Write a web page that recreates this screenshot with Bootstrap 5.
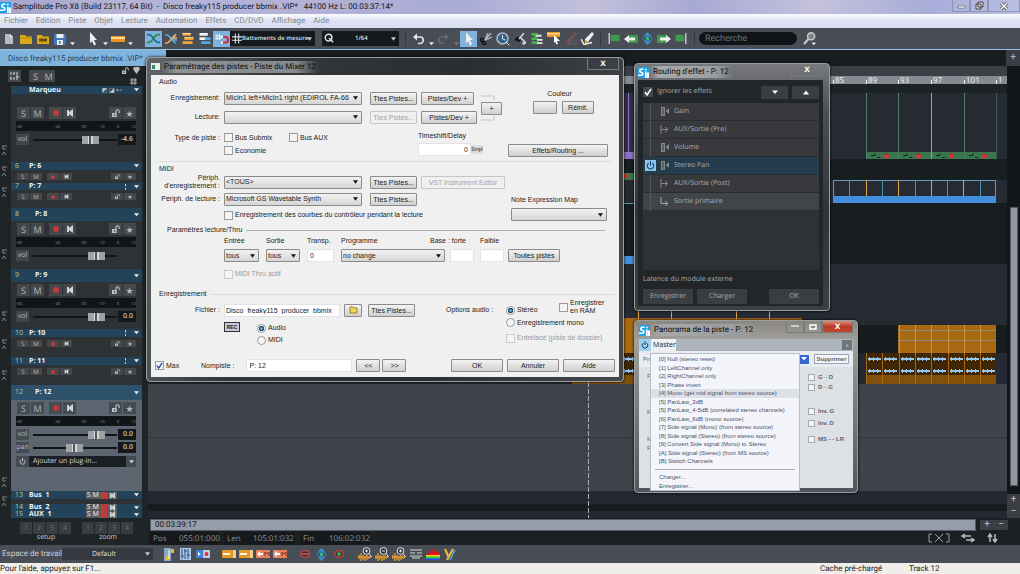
<!DOCTYPE html>
<html lang="fr">
<head>
<meta charset="utf-8">
<meta name="viewport" content="width=device-width, initial-scale=1">
<title>Samplitude Pro X8</title>
<link href="https://cdn.jsdelivr.net/npm/bootstrap@5.3.0/dist/css/bootstrap.min.css" rel="stylesheet">
<style>
:root{--ui:Roboto,"Noto Sans",sans-serif;--ui2:"Open Sans","Noto Sans",sans-serif;--dlg:"Liberation Sans",Arial,sans-serif;--track:#23435a}
body{font:8px/12px var(--ui);background:#1c2023;color:#c8cccf;overflow:hidden;text-rendering:geometricPrecision}
button,input,select{font:inherit;color:inherit;border-radius:0;margin:0;padding:0;text-rendering:inherit}
button{border:0;background:none;line-height:1}
svg{display:block;flex:none}
.minw0{min-width:0;min-height:0}
/* application frame */
.titlebar{height:14px;color:#15151c;background:linear-gradient(90deg,#a6a4cc 0,#b4b3d6 12%,#b3b1d6 30%,#a9abd6 45%,#c3c0dc 58%,#a7a8d4 68%,#c4c1dd 80%,#a7add8 91%,#b9bfe2)}
.winbtns button{width:18px;height:12px;border:1px solid #8f93b8;border-top:0;border-radius:0;display:grid;place-items:center}
.menubar{height:14px;background:linear-gradient(#fbfcff,#dfe4f3 45%,#d8def0)}
.menubar a{color:#85888f;text-decoration:none}
.toolbar{height:22px;background:#494e56;border-bottom:1px solid #8fc1e6}
.tb{width:17px;height:16px;display:grid;place-items:center;flex:none}
.tb.on{background:#7fb2dc}
.tc{width:8px;height:14px;display:grid;place-items:end center;flex:none}
.tsep{width:1px;height:14px;background:#34383e;flex:none}
select{appearance:none;background-repeat:no-repeat;background-position:right 3px center;background-size:5px 4px}
.dk{background-color:#15181c;border:0;color:#dfe2e4;height:15px;background-image:url("data:image/svg+xml,%3Csvg xmlns='http://www.w3.org/2000/svg' viewBox='0 0 6 4'%3E%3Cpath d='M0 0h6L3 4z' fill='%23c8ccd0'/%3E%3C/svg%3E")}
.gridsel{width:85px;font:600 6px/15px var(--ui2);padding-left:12px}
.qsel{width:77px;margin-left:7px;font:600 6px/15px var(--ui2);padding-left:33px}
.glyph{width:0;position:relative}
.glyph svg{position:absolute;left:2px;top:-6px}
.search{width:98px;height:13px;border:0;border-radius:7px;background:#101317;padding-left:6px;font-size:9px}
.search::placeholder{color:#70757b;opacity:1}
.tabstrip{height:16px;background:#1a1d20}
.doctab{width:166px;background:#80b3de;color:#26435e;padding-left:8px;line-height:17px}
.plus{background:#3b3f44;color:#c2c6ca;width:14px;font-size:10px}
/* track list */
.tracks{width:148px;background:#1f2427;flex:none;font-family:var(--ui2)}
.trk{margin-left:11px;margin-right:6px;background:#2e3235;overflow:hidden}
.trk.sel{background:#5c6570}
.th{background:var(--track);color:#eef3f6;font-weight:700;font-size:7px;line-height:1;padding:0 3px 0 4px}
.th i{font-style:normal;font-weight:400;color:#b7c98f;width:14px;display:inline-block}
.th.tall i{width:20px}
.sel .th{background:#2f526c}
.cb{background:#44484b;color:#b4b8bb;display:grid;place-items:center;width:13px;height:12px;font-size:9px}
.small-b .cb{width:12px;height:7px;font-size:6px}
.meter{height:10px;margin:0 6px 0 5px;background:#121518;color:#8d9296;font-size:4px;line-height:6px;padding-top:4px}
.vlab{background:#42464a;color:#b9bdc0;width:13px;line-height:11px;font-size:7px;text-align:center}
.sel .cb,.sel .vlab{background:#454b53}
.fader{width:84px;height:8px;background:linear-gradient(#111416,#111416) 0 3px/100% 2px no-repeat}
.fader b{display:block;height:8px;width:17px;background:linear-gradient(90deg,#9fa4a9 0 6px,#d9dcdf 6px 7px,#555 7px 9px,#d2d6d9 9px 11px,#9ba0a5 11px)}
.num{background:#15181b;color:#c4c8cb;width:18px;font-size:7px;line-height:11px;text-align:right;padding-right:3px;font-weight:600}
.setb button{width:12px;height:12px;background:#3a3d40;color:#6c7073;margin-right:1px}
.edge{width:11px;left:0;top:0;bottom:0;position:absolute}
/* bottom */
.tscroll{height:12px;background:#969daa;border:1px solid #565c66;color:#111;line-height:10px}
.posbox{background:#16191c;color:#8e9397;line-height:13px;padding:0 3px;white-space:pre}
.posbox span{display:inline-block;width:26px}
.wsbar{height:18px;background:#494e56}
.statusbar{height:11px;background:#f0eeeb;color:#222;line-height:11px}
/* floating windows */
.win{position:absolute;border-radius:4px;border:1px solid #9a9da0;box-shadow:0 0 3px #000;z-index:2}
.win>header{font-size:8px;color:#0c0c0c}
.w1{left:146px;top:57px;width:478px;background:linear-gradient(100deg,#60666a,#33363a 25%,#2a2d31 60%,#44484c);padding:0 4px 4px}
.w1>header{height:17px}
.w1 header .halo{background:linear-gradient(90deg,#8b8f9200,#8e9295 10%,#85898c 85%,#85898c00)}
.w2{left:634px;top:63px;width:196px;background:linear-gradient(#77797c,#4b4e52 20%,#303438 60%,#3c3f43);padding:0 6px 4px 3px}
.w2>header{height:16px}
.w3{left:634px;top:320px;width:224px;background:linear-gradient(#8a8680,#a3a19e 12%,#85888c 35%,#50565c);padding:0 4px 4px}
.w3>header{height:18px}
.halo2{background:linear-gradient(90deg,#a6a8aa00,#a6a8aa 12%,#9b9d9f 80%,#9b9d9f00)}
.xb{width:32px;height:12px;border:1px solid #777b7f;border-top:0;color:#fff;font:700 10px/9px var(--dlg)}
.dlg{background:#f0f0f0;color:#1b1b1b;font:7px/10px var(--dlg);padding:2px 4px 0 4px;text-rendering:auto}
.r{display:flex;align-items:center}
.lab{width:65px;text-align:right;flex:none;margin-right:4px}
.dlg select,.dlg .btnw{height:13px;border:1px solid #8b8b8b;border-radius:1px;background-color:#e6e6e6;color:#1b1b1b}
.dlg select{padding:0 12px 0 1px;background-image:url("data:image/svg+xml,%3Csvg xmlns='http://www.w3.org/2000/svg' viewBox='0 0 6 4'%3E%3Cpath d='M0 0h6L3 4z' fill='%23111'/%3E%3C/svg%3E"),linear-gradient(#f2f2f2,#d6d6d6);background-size:5px 4px,100% 100%;background-position:right 3px center,0 0}
.dlg .btnw{background-image:linear-gradient(#f3f3f3,#ddd 60%,#d0d0d0);text-align:center;white-space:nowrap}
.dlg .btnw:disabled{background:#f0f0f0;border-color:#c6c6c6;color:#a3a3a3}
.dlg input[type=text]{height:13px;border:1px solid #e3e3e3;background:#fff;padding:0 2px}
.thru label>*{margin-top:3px}
.tick{appearance:none;width:9px;height:9px;border:1px solid #9a9a9a;background:#f4f4f4;flex:none;margin-right:2px}
.tick:checked{background:#f4f8ff url("data:image/svg+xml,%3Csvg xmlns='http://www.w3.org/2000/svg' viewBox='0 0 8 8'%3E%3Cpath d='M1 4l2 3 4-6' fill='none' stroke='%23203a98' stroke-width='1.4'/%3E%3C/svg%3E")}
.tick[type=radio]{border-radius:50%}
.tick[type=radio]:checked{background:radial-gradient(#6fd0f5 0,#173a63 48%,#f4f4f4 60%)}
.tick:disabled{border-color:#ccc}
.route .tick{width:10px;height:10px;margin-right:4px;border-color:#43474b}
.route .tick:checked{background:#43474b url("data:image/svg+xml,%3Csvg xmlns='http://www.w3.org/2000/svg' viewBox='0 0 8 8'%3E%3Cpath d='M1 4l2 3 4-6' fill='none' stroke='%23fff' stroke-width='1.500'/%3E%3C/svg%3E")}
.line{height:1px;background:#dcdcdc;flex:1}
.route{background:#222629;color:#a9adb0;font:7px/12px var(--ui2);padding:5px 4px 2px 5px}
.route button{background:#3a3e42}
.route .arrow{width:27px;height:13px;color:#fff;display:grid;place-items:center}
.rlist{background:#2f3235;height:167px;margin-top:4px}
.rlist li{height:18px;border-bottom:1px solid #2a2d30;background:#37393d}
.rlist li:last-child{background:#414548}
.rlist li.act{background:#243c4c}
.rlist li .spine{width:8px;height:18px;border-right:1px solid #54585c;margin-right:9px}
.rlist li .pw{background:#8cc4ee;color:#1c4666;padding:1px;margin:0 4px 0 2px}
.foot button{width:50px;height:15px}
.pan{background:#dde1e6;color:#5d636d;font:6px/9px var(--dlg);height:149px;text-rendering:auto}
.pan .menu{position:absolute;left:11px;top:14px;width:150px;background:#f4f5fa;color:#4a5068;border:1px solid #b9bdc9;padding-top:1px}
.pan .menu button{display:block;width:100%;text-align:left;padding-left:8px;height:9px;line-height:9px;white-space:nowrap}
.pan .menu button:nth-child(even){height:8px;line-height:8px}
.pan .menu .hov{background:#dde0e7}
.pan .tick{width:7px;height:7px;margin-right:3px;border-color:#a6acb5}
.ptab{width:37px;height:12px;background:#eef0f2;color:#222;font:7px/12px var(--ui2)}
</style>
</head>
<body class="d-flex flex-column vh-100">

<svg width="0" height="0" class="position-absolute" aria-hidden="true">
<defs>
<symbol id="logo" viewBox="0 0 12 12"><path fill="#1fa2ea" d="M0 0h12v12H0z"/><path d="M6 2.500H3.300C1.500 3 1.500 5.500 3.500 5.700 6 6 6 9 3.500 9H0M8.500 5v7M8.500 2v1.500" fill="none" stroke="#fff" stroke-width="1.800"/><path d="M9.500 6H12v6H9.500z" fill="#fff"/></symbol>
<symbol id="file" viewBox="0 0 12 12"><path d="M2 1h5l3 3v7H2z" fill="#b9bcbf"/><path d="M7 1v3h3z" fill="#e8eaeb"/></symbol>
<symbol id="fold" viewBox="0 0 12 12"><path d="M0 2h5l1 1.500h6V11H0z" fill="#d9a91b"/><path d="M0 5h12" stroke="#a37905" stroke-width=".6"/></symbol>
<symbol id="fold2" viewBox="0 0 12 12"><path d="M0 2h5l1 1.500h6V11H0z" fill="#d9a91b"/><path d="M2 7h8M3 5.500v3M5 4.800v4.500M7 5.500v3M9 5v4" stroke="#3c3108"/></symbol>
<symbol id="save" viewBox="0 0 12 12"><path d="M0 1h11l1 1v10H0z" fill="#3f78b4"/><path d="M2.500 1h7v4h-7zM3 7h6v5H3z" fill="#e8edf2"/><path d="M5 8h1.500v3H5z" fill="#3f78b4"/></symbol>
<symbol id="car" viewBox="0 0 6 4"><path d="M0 0h6L3 3.500z" fill="currentColor"/></symbol>
<symbol id="cur" viewBox="0 0 12 14"><path d="M3 0l7 8H7l2 4.500-2 1L5 9l-2 2.500z" fill="#eceef0"/></symbol>
<symbol id="obj" viewBox="0 0 14 6"><path d="M0 0h14v6H0z" fill="#e9951f"/><path d="M0 1h14v2H0z" fill="#ffd894"/></symbol>
<symbol id="xf" viewBox="0 0 12 10"><path d="M0 1.500h2c3 0 5 7 8 7h2" fill="none" stroke="#176a9d" stroke-width="1.600"/><path d="M0 8.500h2c3 0 5-7 8-7h2" fill="none" stroke="#2c8a45" stroke-width="1.600"/></symbol>
<symbol id="xf2" viewBox="0 0 12 12"><path d="M0 2h2c3 0 4 6 9 8M7 5l4-4M8 7h4" fill="none" stroke="#5ea9e0" stroke-width="1.600"/><path d="M0 10h2c3 0 4-6 9-8M8 5h4" fill="none" stroke="#eab168" stroke-width="1.600"/></symbol>
<symbol id="st1" viewBox="0 0 12 12"><path d="M0 0h9v3H0zM2 4.500h10v3H2zM0 9h11v3H0z" fill="#f0a73a"/><path d="M0 0h9v1H0zM2 4.500h10v1H2z" fill="#ffe0a6"/></symbol>
<symbol id="st2" viewBox="0 0 12 12"><path d="M0 0h9v3H0zM0 4.500h7v3H0z" fill="#f0f3f5"/><path d="M6 4.500h6v3H6zM2 9h10v3H2z" fill="#5aa7dd"/></symbol>
<symbol id="snap" viewBox="0 0 14 12"><path d="M2 1v6M4.500 1v6M0 3h6.500M0 5.500h6.500" stroke="#eef3f7"/><path d="M7 4h3.500a2.500 2.500 0 0 1 0 5.500H7" fill="none" stroke="#cf2b38" stroke-width="2"/><path d="M6 3h2v2H6zM6 8.500h2v2H6z" fill="#fff"/></symbol>
<symbol id="hash" viewBox="0 0 12 12"><path d="M4 0v12M8 0v12M0 4h12M0 8h12" stroke="#dfe2e4" stroke-width="1.300"/></symbol>
<symbol id="quant" viewBox="0 0 12 12"><circle cx="5.500" cy="5.500" r="4" fill="none" stroke="#dfe2e4" stroke-width="1.800"/><path d="M6 6l5 5" stroke="#dfe2e4" stroke-width="1.800"/></symbol>
<symbol id="undo" viewBox="0 0 12 12"><path d="M2 4h5a3.200 3.200 0 0 1 0 6.500H5" fill="none" stroke="currentColor" stroke-width="1.600"/><path d="M0 4l4-3.500V7.500z" fill="currentColor"/></symbol>
<symbol id="scis" viewBox="0 0 12 12"><path d="M11 0L4.500 7.500M12 4L5 7M8 0L5 7" stroke="#b8bbbe" stroke-width="1.300"/><circle cx="2" cy="7" r="1.600" fill="none" stroke="#111" stroke-width="1.400"/><circle cx="4" cy="10" r="1.600" fill="none" stroke="#111" stroke-width="1.400"/></symbol>
<symbol id="ring" viewBox="0 0 14 14"><circle cx="6.500" cy="6.500" r="5.500" fill="#2f628a" stroke="#b1b9bf" stroke-width="1.500"/><path d="M6.500 3v4l3 1M10 10l3.500 3.500" stroke="#dfe3e6" fill="none"/></symbol>
<symbol id="scis2" viewBox="0 0 12 12"><path d="M1 6l5 2M3 4l3 4" stroke="#111" stroke-width="2"/><path d="M6 4l6 6H9l1 2M10 0L5 6" fill="none" stroke="#d6d8da" stroke-width="1.500"/></symbol>
<symbol id="grn" viewBox="0 0 12 12"><path d="M0 0h7v3H0zM0 4.500h7v3H0zM0 9h7v3H0z" fill="#43b34b"/><path d="M7 2h4v2H4V3zM6 6.500h6v2H6zM6 10h6v2H6z" fill="#e3e6e4"/></symbol>
<symbol id="objc" viewBox="0 0 14 13"><path d="M0 0h13v5H0z" fill="#ef9a27"/><path d="M0 1h13v1.500H0z" fill="#ffd187"/><path d="M7 3l6 6h-3l1 3-1.500.5L8 9.500 7 11z" fill="#fff"/></symbol>
<symbol id="pen" viewBox="0 0 14 13"><path d="M3 9L11 0l2 2-8 9-3 1z" fill="currentColor"/><path d="M2 12h11M6 9v3M9 7v5M12 8v4" fill="none" stroke="#5f5a5c"/></symbol>
<symbol id="penw" viewBox="0 0 14 13"><path d="M4 7L11 0l2 2-6 8-3 1z" fill="#eceef0"/><path d="M4 9l2 1" stroke="#e7a52b" stroke-width="2"/><path d="M0 7l3 5.500 8-2" fill="none" stroke="#eceef0" stroke-width="1.500"/></symbol>
<symbol id="gs" viewBox="0 0 12 12"><path d="M0 0h1.500v12H0z" fill="#ccd0d2"/><path d="M2.500 2H12v7H2.500z" fill="#3f9948"/></symbol>
<symbol id="ga" viewBox="0 0 14 10"><path d="M4 1h10v8H4z" fill="#3f9948"/><path d="M0 5L5 1v2.500h6v3H5V9z" fill="#eef1f0"/></symbol>
<symbol id="eye" viewBox="0 0 12 14"><path d="M6 0l4 4H2zM6 14l4-4H2z" fill="#3d8fc9"/><path d="M2.500 4.500L1 7l1.500 2.500h7L11 7 9.500 4.500z" fill="#1f5478" stroke="#3d8fc9"/><circle cx="6" cy="7" r="2" fill="#35c06a"/></symbol>
<symbol id="eyer" viewBox="0 0 12 14"><ellipse cx="6" cy="7" rx="5" ry="4" fill="#412c31" stroke="#c6464b" stroke-width="1.500"/><path d="M2 7h8" stroke="#ed6a6a" stroke-width="1.500"/></symbol>
<symbol id="eyeg" viewBox="0 0 12 14"><ellipse cx="6" cy="7" rx="5" ry="4" fill="#412c31" stroke="#c6464b" stroke-width="1.500"/><path d="M4 5h4v4H4z" fill="#35b04a"/></symbol>
<symbol id="mag" viewBox="0 0 12 12"><circle cx="7.500" cy="4" r="3.300" fill="#7f8488" stroke="#c6c9cc" stroke-width="1.300"/><path d="M5 6.500L1 11" stroke="#c6c9cc" stroke-width="2"/><path d="M8 10h4l-2 2z" fill="#fff"/></symbol>
<symbol id="spk" viewBox="0 0 8 8"><path d="M1 1h2v6H1zM3 3l4-3v8L3 5z" fill="#d0d3d5"/></symbol>
<symbol id="lock" viewBox="0 0 10 10"><path d="M5 5V3a2 2 0 0 1 4 0v2" fill="none" stroke="#bdc1c4" stroke-width="1.400"/><path d="M0 5h6v5H0z" fill="#bdc1c4"/><path d="M2.500 6.500h1.500v2H2.500z" fill="#333"/></symbol>
<symbol id="fx" viewBox="0 0 9 9"><path d="M1 0h4v9H1z" fill="#85898c"/><path d="M3 1v7" stroke="#37393d"/><path d="M9 1v6L5.500 4z" fill="#85898c"/></symbol>
<symbol id="aux" viewBox="0 0 9 9"><path d="M1 0v9M1 4.500h6M5 2l3 2.500L5 7" fill="none" stroke="#85898c"/></symbol>
<symbol id="out" viewBox="0 0 9 9"><path d="M1 0v6.500h6M5 4l3 2.500L5 9" fill="none" stroke="#a5a8ab"/></symbol>
<symbol id="pwr" viewBox="0 0 10 10"><path d="M3 2.500a3.500 3.500 0 1 0 4 0M5 0v5" fill="none" stroke="currentColor" stroke-width="1.200"/></symbol>
<symbol id="zin" viewBox="0 0 14 14"><path d="M1 8v4M3 6v8M5 8v5M7 9v5M9 8v5M11 10v2M0 10h13" fill="none" stroke="#e59a2c" stroke-width="1.300"/><circle cx="8.500" cy="4" r="3.400" fill="#31363c" stroke="#e4e7ea"/><path d="M7 4h3M11 6.500l3 4" stroke="#e4e7ea"/></symbol>
<symbol id="plusv" viewBox="0 0 14 14"><path d="M8.500 2.500v3" stroke="#e4e7ea"/></symbol>
<symbol id="spec" viewBox="0 0 14 12"><path d="M0 6l2 1 2-5 2 3 2-5 2 4 1-1 3 4v5H0z" fill="#e11"/><path d="M0 7h14v5H0z" fill="#fc2"/><path d="M0 8.500h14V12H0z" fill="#2c4"/><path d="M0 10.500h14V12H0z" fill="#34e"/></symbol>
<symbol id="rng" viewBox="0 0 14 8"><path d="M0 0h14v8H0z" fill="#e29a2a"/><path d="M1 3h7v2H1z" fill="#fff4dc"/><path d="M11 0h3v8h-3z" fill="#f6d08c"/></symbol>
<symbol id="rng2" viewBox="0 0 14 8"><path d="M0 0h14v8H0z" fill="#e8805c"/><path d="M1 4l3-3v2h3v2H4v2z" fill="#fff"/><path d="M9 6V2l2 2 2-2v4" fill="none" stroke="#7d2f1c"/></symbol>
<pattern id="wave" width="4" height="4" patternUnits="userSpaceOnUse"><path d="M0 1h4v2H0zM1 0h1v4H1z" fill="#93c8f0"/></pattern>
</defs></svg>

<header class="titlebar d-flex align-items-center flex-shrink-0">
  <svg style="margin-right:2px" width="11" height="11"><use href="#logo"/></svg>
  <span class="flex-fill" style="white-space:pre">Samplitude Pro X8 (Build 23117, 64 Bit)  -  Disco freaky115 producer bbmix .VIP*   44100 Hz L: 00:03:37:14*</span>
  <div class="winbtns d-flex align-self-start">
    <button aria-label="Réduire"><svg width="9" height="6"><path d="M1 3h7v2H1z" fill="#fff" stroke="#555" stroke-width=".6"/></svg></button>
    <button aria-label="Restaurer"><svg width="9" height="9"><path d="M3 1h5v5H3zM1 3h5v5H1z" fill="#ddd" stroke="#444"/></svg></button>
    <button aria-label="Fermer" style="width:32px"><svg width="8" height="8"><path d="M1 1l6 6M7 1L1 7" stroke="#444" stroke-width="3"/><path d="M1 1l6 6M7 1L1 7" stroke="#fff" stroke-width="1.500"/></svg></button>
  </div>
</header>
<nav class="menubar d-flex align-items-center flex-shrink-0 ps-1 gap-2">
  <a href="#">Fichier</a><a href="#">Edition</a><a href="#">Piste</a><a href="#">Objet</a><a href="#">Lecture</a><a href="#">Automation</a><a href="#">Effets</a><a href="#">CD/DVD</a><a href="#">Affichage</a><a href="#">Aide</a>
</nav>

<div class="toolbar d-flex align-items-center flex-shrink-0" id="toolbar"></div>

<div class="tabstrip d-flex flex-shrink-0 justify-content-between">
  <div class="doctab">Disco freaky115 producer bbmix .VIP*</div>
  <button class="plus" aria-label="Nouvel onglet">+</button>
</div>

<main class="d-flex flex-fill minw0">
  <aside class="tracks d-flex flex-column position-relative" id="tracks">
    <div class="d-flex align-items-center ps-2 flex-shrink-0" style="height:20px">
      <button class="cb me-2" aria-label="Mixer"><svg width="9" height="8"><path d="M1 0v3M1 5v3M4 0v2M4 5v3M7 0v8M0 6h2M3 2h2M6 5h3" stroke="#d0d3d5"/></svg></button>
      <button class="cb">S</button><button class="cb me-auto">M</button>
      <div class="me-2"><div class="d-flex gap-1"><svg width="7" height="7"><use href="#lock"/></svg><svg width="7" height="7" viewBox="0 0 7 7"><path d="M1 0h5l1 2-3.500 5L0 2z" fill="#bbb"/></svg></div><svg class="mt-1 ms-2" width="7" height="7"><path d="M2 0v7M5 0v7M0 2h7M0 5h7" stroke="#bbb"/></svg></div>
    </div>
    <svg id="edge" class="edge" width="11" height="100%"></svg>
  </aside>

  <section class="d-flex flex-column flex-fill minw0">
    <div class="d-flex flex-fill minw0">
      <svg id="arrange" class="minw0" width="10" height="100%" font-family="Open Sans" font-size="8" style="flex:1 1 0"></svg>
      <div class="d-flex flex-column justify-content-end align-items-center" style="width:13px;background:#14171a">
        <div style="width:8px;height:279px;background:#8f97a3;border:1px solid #555c66" class="mb-2"></div>
        <button class="plus" style="height:12px">+</button><button class="plus" style="height:12px">−</button>
      </div>
    </div>
    <div class="d-flex align-items-center flex-shrink-0" style="height:13px;padding:0 12px 0 2px">
      <div class="tscroll flex-fill ps-1">00:03:39:17</div>
      <button class="plus ms-1">+</button><button class="plus">−</button>
    </div>
    <div class="d-flex align-items-center flex-shrink-0" style="height:14px;padding-left:2px;font-family:var(--ui2)">
      <div class="posbox" style="width:69px;margin-right:5px"><span>Pos</span>055:01:000</div><div class="posbox" style="width:71px;margin-right:5px"><span>Len</span>105:01:032</div><div class="posbox me-auto" style="width:69px"><span>Fin</span>106:02:032</div>
      <svg width="22" height="10"><path d="M4 1H1v8h3M18 1h3v8h-3M7 1l8 8M15 1L7 9" fill="none" stroke="#999fa5"/></svg>
      <svg style="margin-left:11px" width="14" height="10"><path d="M1 3h9M4 1L1 3l3 2M13 7H5M10 5l3 2-3 2" fill="none" stroke="#b5b9bd" stroke-width="1.500"/></svg>
      <svg style="margin:0 21px 0 12px" width="12" height="10"><path d="M3 9V2M1 4l2-3 2 3M8 1v7M6 6l2 3 2-3" fill="none" stroke="#b5b9bd" stroke-width="1.500"/></svg>
    </div>
  </section>

  <!-- Track settings -->
  <div class="win w1">
    <header class="d-flex align-items-center">
      <svg width="9" height="7"><path d="M0 0h9v7H0z" fill="#e9efee"/><path d="M1 2h3v4H1z" fill="#2f8a62"/></svg>
      <span class="halo px-1">Paramétrage des pistes - Piste du Mixer 12</span>
      <button class="xb ms-auto align-self-start" aria-label="Fermer">x</button>
    </header>
    <div class="dlg">
      <div class="ps-1" style="height:12px">Audio</div>
      <div class="d-flex" style="height:39px">
        <div>
          <div class="r" style="height:18px"><label class="lab" for="rec">Enregistrement:</label><select id="rec" style="width:138px"><option>MicIn1 left+MicIn1 right (EDIROL FA-66 I</option></select><button class="btnw ms-2" style="width:47px">Ttes Pistes...</button><button class="btnw ms-1" style="width:53px">Pistes/Dev +</button></div>
          <div class="r" style="height:20px"><label class="lab" for="play">Lecture:</label><select id="play" style="width:138px"></select><button class="btnw ms-2" style="width:47px" disabled>Ttes Pistes...</button><button class="btnw ms-1" style="width:56px">Pistes/Dev +</button></div>
        </div>
        <svg width="15" height="38" class="ms-1"><path d="M0 7h13v4M0 31h13v-4" fill="none" stroke="#c4c4c4"/></svg>
        <button class="btnw align-self-center" style="width:21px;margin-left:-15px">+</button>
        <div class="ms-auto pe-1" style="margin-right:17px"><div class="text-center" style="height:12px;padding-right:8px">Couleur</div><div class="r" style="gap:5px"><button class="btnw" style="width:24px" aria-label="Couleur de piste"></button><button class="btnw" style="width:32px">Réinit.</button></div></div>
      </div>
      <div class="d-flex" style="height:33px">
        <div style="width:263px;padding-top:3px">
          <div class="r" style="height:13px"><span class="lab">Type de piste :</span><label class="r" style="width:65px"><input class="tick" type="checkbox">Bus Submix</label><label class="r"><input class="tick" type="checkbox">Bus AUX</label></div>
          <div class="r" style="height:13px"><span class="lab"></span><label class="r"><input class="tick" type="checkbox">Economie</label></div>
        </div>
        <div style="width:90px;padding-top:3px"><label for="ts" class="d-block">Timeshift/Delay</label><div class="r" style="margin-top:2px"><input id="ts" type="text" value="0" style="width:53px;text-align:right"><button style="width:12px;font-size:5px;background:#ddd;height:9px">Smpl</button></div></div>
        <button class="btnw mt-3" style="width:100px">Effets/Routing ...</button>
      </div>
      <div class="line mx-1"></div>
      <div class="ps-1" style="height:11px;padding-top:2px">MIDI</div>
      <div class="d-flex">
        <div style="width:356px">
          <div class="r" style="height:18px"><label class="lab" for="mi" style="line-height:8px">Périph.<br>d'enregistrement :</label><select id="mi" style="width:138px"><option>&lt;TOUS&gt;</option></select><button class="btnw ms-2" style="width:47px">Ttes Pistes...</button><button class="btnw ms-1" style="width:84px" disabled>VST Instrument Editor</button></div>
          <div class="r" style="height:16px"><label class="lab" for="mo">Périph. de lecture :</label><select id="mo" style="width:138px"><option>Microsoft GS Wavetable Synth</option></select><button class="btnw ms-2" style="width:47px">Ttes Pistes...</button></div>
          <div class="r" style="height:16px"><span class="lab"></span><label class="r"><input class="tick" type="checkbox">Enregistrement des courbes du contrôleur pendant la lecture</label></div>
        </div>
        <div style="height:51px;padding-top:22px"><label for="nem" class="d-block">Note Expression Map</label><select id="nem" style="width:96px;margin-top:3px"></select></div>
      </div>
      <div class="r gap-1" style="height:12px;padding-left:12px;padding-right:10px">Paramètres lecture/Thru<span class="line" style="background:#aaa"></span></div>
      <div class="d-flex align-items-end thru" style="height:26px;padding-left:69px">
        <label>Entrée<select class="d-block" style="width:35px;margin-right:7px"><option>tous</option></select></label>
        <label>Sortie<select class="d-block" style="width:34px;margin-right:7px"><option>tous</option></select></label>
        <label>Transp.<input type="text" class="d-block" value="0" style="width:27px;margin-right:7px"></label>
        <label>Programme<select class="d-block" style="width:104px;margin-right:5px"><option>no change</option></select></label>
        <label class="text-nowrap" style="width:30px;text-indent:-20px">Base : forte<input type="text" class="d-block" style="width:24px"></label>
        <label>Faible<input type="text" class="d-block" style="width:24px;margin-right:4px"></label>
        <button class="btnw" style="width:52px">Toutes pistes</button>
      </div>
      <div class="r" style="height:24px;padding-left:69px;color:#999"><label class="r"><input class="tick" type="checkbox" disabled>MIDI Thru actif</label></div>
      <div class="r gap-1 ps-1" style="height:16px">Enregistrement<span class="line"></span></div>
      <div class="d-flex" style="height:52px">
        <div style="width:291px">
          <div class="r" style="height:16px"><label class="lab" for="fi">Fichier :</label><input id="fi" type="text" value="Disco_freaky115_producer_bbmix_" style="width:116px;padding:0 1px"><button class="btnw" style="width:18px;margin-left:4px;display:grid;place-items:center" aria-label="Parcourir"><svg width="9" height="8"><path d="M1 1h3l1 1h3v5H1z" fill="#f3d75c" stroke="#94802a"/></svg></button><button class="btnw" style="width:47px;margin-left:6px">Ttes Pistes...</button></div>
          <div class="d-flex pt-1"><span class="lab"></span><button style="width:16px;height:10px;border:1px solid #333;background:#c9c9dc;font-weight:700;font-size:5px;line-height:8px">REC</button>
            <div style="margin-left:17px"><label class="r" style="height:12px"><input class="tick" type="radio" name="am" checked>Audio</label><label class="r" style="height:12px"><input class="tick" type="radio" name="am">MIDI</label></div></div>
        </div>
        <span style="width:60px;padding-top:3px">Options audio :</span>
        <div>
          <div class="d-flex"><label class="r" style="width:53px;height:16px"><input class="tick" type="radio" name="ch" checked>Stéréo</label><label class="d-flex" style="line-height:8px;margin-top:-3px"><input class="tick mt-1" type="checkbox"><span>Enregistrer<br>en RAM</span></label></div>
          <label class="r" style="height:9px"><input class="tick" type="radio" name="ch">Enregistrement mono</label>
          <label class="r" style="height:10px;margin-top:6px;color:#999"><input class="tick" type="checkbox" disabled>Entrelacé (piste de dossier)</label>
        </div>
      </div>
      <div class="r" style="height:23px">
        <label class="r" style="width:46px"><input class="tick" type="checkbox" checked>Max</label>
        <label class="r">Nompiste :<input type="text" value="P: 12" style="width:106px;margin-left:12px"></label>
        <button class="btnw ms-1" style="width:24px">&lt;&lt;</button><button class="btnw" style="width:24px;margin-left:2px">&gt;&gt;</button>
        <div class="d-flex ms-auto gap-1"><button class="btnw" style="width:52px">OK</button><button class="btnw" style="width:52px">Annuler</button><button class="btnw" style="width:52px">Aide</button></div>
      </div>
    </div>
  </div>

  <!-- Effect routing -->
  <div class="win w2">
    <header class="d-flex align-items-center"><svg width="11" height="11"><use href="#logo"/></svg><span class="halo2 px-1">Routing d'effet - P: 12</span><button class="xb ms-auto align-self-start" aria-label="Fermer">x</button></header>
    <div class="route">
      <div class="r" style="height:14px"><label class="r flex-fill"><input type="checkbox" class="tick" checked>Ignorer les effets</label>
        <button class="arrow" aria-label="Descendre"><svg width="6" height="5"><use href="#car"/></svg></button><button class="arrow ms-1" aria-label="Monter"><svg width="6" height="5" viewBox="0 0 6 5"><path d="M0 4.500h6L3 .5z" fill="#fff"/></svg></button></div>
      <ul class="rlist list-unstyled mb-0" id="rlist"></ul>
      <div style="height:19px;padding-top:4px">Latence du module externe</div>
      <div class="d-flex gap-1 foot"><button>Enregistrer</button><button>Charger</button><button class="ms-auto">OK</button></div>
    </div>
  </div>

  <!-- Track panorama -->
  <div class="win w3">
    <header class="d-flex align-items-center"><svg width="11" height="11"><use href="#logo"/></svg><span class="halo2 px-1">Panorama de la piste - P: 12</span>
      <div class="d-flex ms-auto align-self-start"><button class="xb" style="width:18px" aria-label="Réduire"><svg class="m-auto" width="8" height="3"><path d="M0 0h8v2H0z" fill="#ccc"/></svg></button><button class="xb" style="width:18px" aria-label="Agrandir"><svg class="m-auto" width="8" height="6"><path d="M1 1h6v4H1z" fill="none" stroke="#fff" stroke-width="1.500"/></svg></button><button class="xb" style="width:31px;background:linear-gradient(#dd8b7c,#b93a26 50%,#c5452d)" aria-label="Fermer">x</button></div></header>
    <div class="pan position-relative">
      <div class="d-flex justify-content-between align-items-center" style="background:#aeb4bc;height:12px;padding-right:1px"><div class="ptab r"><span style="background:#9fd0f0;padding:2px;margin-right:2px"><svg width="8" height="8" style="color:#234"><use href="#pwr"/></svg></span>Master</div><button style="width:10px;height:10px;background:#6e747b;color:#ddd" aria-label="Ajouter">+</button></div>
      <div class="r justify-content-between" style="height:16px;background:#e8ebef;padding:0 4px"><span>Pre</span><div class="r" style="gap:5px"><button style="width:10px;height:9px;background:#3567cf;color:#fff;display:grid;place-items:center" aria-label="Liste"><svg width="6" height="4"><use href="#car"/></svg></button><button style="width:35px;height:10px;border:1px solid #9da5b2;background:#f3f5f8;font-weight:700">Supprimer</button></div></div>
      <div class="d-flex justify-content-between" style="padding:5px 9px 0 8px"><div>P<br><br><br><br>R<br><br><br>M<br>F</div>
        <div style="width:36px;font-weight:700"><label class="r" style="height:10px"><input type="checkbox" class="tick">G→D</label><label class="r" style="height:10px"><input type="checkbox" class="tick">D→G</label><label class="r" style="height:12px;margin-top:13px"><input type="checkbox" class="tick">Inv. G</label><label class="r" style="height:12px"><input type="checkbox" class="tick">Inv. D</label><label class="r text-nowrap" style="height:12px;margin-top:4px"><input type="checkbox" class="tick">MS - - LR</label></div></div>
      <div class="menu" id="panmenu"></div>
    </div>
  </div>
</main>

<footer class="flex-shrink-0">
  <div class="wsbar d-flex align-items-center" id="wsbar"><label for="ws" class="text-nowrap" style="width:62px;padding-left:2px">Espace de travail :</label><select id="ws" class="dk" style="width:91px;font:7px var(--ui2);padding-left:30px;height:12px;margin-right:7px;background-color:#363a40"><option>Default</option></select></div>
  <div class="statusbar d-flex"><span class="flex-fill">Pour l'aide, appuyez sur F1...</span><span style="width:89px">Cache pré-chargé</span><span style="width:111px">Track 12</span></div>
</footer>

<script>
const icon = (id, w = 12, h = 12, c = '#e4e6e8') => `<svg width="${w}" height="${h}" style="color:${c}"><use href="#${id}"/></svg>`;
const tool = (id, w, h, on, c) => `<button class="tb${on ? ' on' : ''}" aria-label="${id}">${icon(id, w, h, c)}</button>`;
const caret = (c = '#e4e6e8') => `<button class="tc" aria-label="Options">${icon('car', 5, 4, c)}</button>`;
const sep = (m = 'mx-1') => `<span class="tsep ${m}"></span>`;
const flip = s => `<span style="transform:scaleX(-1)">${s}</span>`;
const glyph = id => `<span class="glyph">${icon(id, 10, 11)}</span>`;

document.getElementById('toolbar').innerHTML =
  tool('file') + tool('fold') + tool('fold2') + tool('save') + caret() + '<span class="ms-2"></span>' +
  tool('cur', 12, 14) + caret() + tool('obj', 14, 6) + caret() + '<span style="width:11px"></span>' +
  tool('xf', 13, 11, true) + tool('xf2') + tool('st1', 12, 11) + tool('st2', 12, 11) + tool('snap', 14, 12, true) +
  glyph('hash') + '<select class="dk gridsel" aria-label="Grille"><option>Battements de mesure</option></select>' +
  '<select class="dk qsel" aria-label="Quantification"><option>1/64</option></select><span class="glyph" style="margin-left:-77px;margin-right:79px">' + icon('quant', 10, 10) + '</span>' +
  sep() + tool('undo') + caret() + flip(tool('undo', 12, 12, false, '#666b71')) + caret('#777') +
  tool('cur', 12, 14, true) + tool('scis') + tool('ring', 14, 14) + tool('scis2') + tool('grn', 12, 11) + tool('objc', 14, 13) + tool('pen', 14, 13, false, '#77544f') + tool('penw', 14, 13) +
  sep() + tool('gs', 12, 11) + tool('ga', 14, 10) + tool('eye', 11, 13) + flip(tool('ga', 14, 10)) + flip(tool('gs', 12, 11)) + sep() +
  '<input class="search" type="search" placeholder="Recherche" aria-label="Recherche"><span class="ms-1"></span>' + tool('mag', 13, 13);

const zoomTool = (name, plus) => `<button class="tb" aria-label="${name}"><svg width="14" height="14"><use href="#zin"/>${plus ? '<use href="#plusv"/>' : ''}</svg></button>`;
document.getElementById('wsbar').insertAdjacentHTML('beforeend',
  `<button class="tb" aria-label="Pistes"><svg width="10" height="13"><path d="M0 0h7v13H0z" fill="#8aa9c4"/><path d="M7 1h3v4H7zM2 8h3v4H2z" fill="#e9c22b"/><path d="M5 2v9" stroke="#fff"/></svg></button>
   <button class="tb" aria-label="Mixer"><svg width="11" height="12"><path d="M0 0h11v12H0z" fill="#a9c7e4"/><path d="M2 1v10M5 1v10M8 1v10M1 8h3M4 3h3M7 7h3" stroke="#2b4f74"/></svg></button>
   <button class="tb" aria-label="Transport"><svg width="14" height="8"><path d="M0 0h7v8H0z" fill="#3c7fd0"/><path d="M7 0h7v8H7z" fill="#b9d2ea"/><path d="M2 2v4l3-2z" fill="#fff"/><circle cx="10.500" cy="4" r="2" fill="#e02d2d"/></svg></button><span style="width:9px"></span>` +
  tool('rng', 14, 8) + tool('rng', 14, 8) + tool('rng2', 14, 8) + tool('rng2', 14, 8) + '<span style="width:8px"></span>' +
  tool('eyer') + tool('eye', 11, 13) + tool('eyeg') + '<span style="width:9px"></span>' +
  zoomTool('Zoom avant', 1) + zoomTool('Zoom arrière') + zoomTool('Zoom tout', 1) +
  `<button class="tb" aria-label="Pistes visibles"><svg width="12" height="10"><path d="M0 1h12M0 4h5M7 4h5M0 7h12M2 9h8" stroke="#d3d6d8"/></svg></button>` +
  tool('spec', 14, 12) + `<button class="tb" aria-label="Outils"><svg width="12" height="13"><path d="M1 1l4 9M9 1L3 12" stroke="#e7b83a" stroke-width="2.200"/><path d="M11 2L6 12" stroke="#5ba5e6" stroke-width="1.500"/></svg></button>`);

// Track strips: [number, name, header height, strip height, kind, fader position, value]
const strips = [
  ['', 'Marqueu', 8, 76, 'big', 64, '-4.6'], [6, 'P: 6', 8, 21, 'min'], [7, 'P: 7', 7, 25, 'min'],
  [8, 'P: 8', 13, 61, 'big', 70, ''], [9, 'P: 9', 13, 60, 'big', 70, '0.0'],
  [10, 'P: 10', 8, 28, 'min'], [11, 'P: 11', 8, 28, 'min'], [12, 'P: 12', 15, 106, 'sel', 70, '0.0'],
  [13, 'Bus  1', 8, 13, 'bus'], [14, 'Bus  2', 7, 7, 'bus'], [15, 'AUX  1', 7, 7, 'bus']];
const rec = r => `<svg width="${2 * r}" height="${2 * r}"><circle cx="${r}" cy="${r}" r="${r}" fill="#c23a3a"/></svg>`;
const fader = (lab, x, v) => `<div class="d-flex align-items-center" style="height:13px;padding:0 6px 0 5px;margin-top:2px"><span class="vlab">${lab}</span><span class="fader ms-1"><b style="margin-left:${x - 15}px"></b></span><span class="ms-auto ${v ? 'num' : ''}">${v}</span></div>`;
function strip([n, name, hh, h, kind, x, v]) {
  const small = kind === 'min', s = small ? 6 : 9;
  const bus = kind === 'bus' ? `<span class="ms-auto d-flex align-items-center" style="margin-right:17px;background:#585c5f;font-weight:600;color:#d5d7d9;height:7px;padding:0 1px;gap:2px">S<span>M</span><svg width="6" height="7"><path d="M0 0h6v7H0z" fill="#c23a3a"/></svg>${icon('spk', 7, 7)}</span>` : '';
  const line = small && n > 6 ? '<svg class="ms-auto me-2" width="1" height="6"><path d="M.5 0v2.500M.5 4v2" stroke="#e6d51e"/></svg>' : '';
  const top = n === '' ? '<span class="ms-auto" style="color:#ccc;font-weight:400;font-size:6px;margin-right:12px">◩ ◪ ▪ ▫</span>' : '';
  let html = `<div class="trk flex-shrink-0 ${kind === 'sel' ? 'sel' : ''}" style="height:${h}px"><div class="th d-flex align-items-center ${hh > 10 ? 'tall' : ''}" style="height:${hh}px"><i>${n}</i><span style="white-space:pre">${name}</span>${bus}${line}${top}<svg class="${bus || line || top ? '' : 'ms-auto'}" width="5" height="4"><use href="#car"/></svg></div>`;
  if (kind !== 'bus') {
    html += `<div class="d-flex ${small ? 'small-b' : ''}" style="padding:0 6px;margin-top:${n === '' ? 13 : small ? 3 : 2}px;height:${small ? 8 : 14}px;gap:1px"><button class="cb">S</button><button class="cb">M</button><button class="cb ms-1" aria-label="Enregistrer">${rec(small ? 2 : 3)}</button><button class="cb" aria-label="Muet">${icon('spk', s - 1, s - 1)}</button><button class="cb ms-auto" aria-label="Verrou">${icon('lock', s - 1, s - 1)}</button><button class="cb" aria-label="Effets">★</button></div>`;
  }
  if (kind === 'big' || kind === 'sel') {
    html += `<div class="meter d-flex justify-content-between"><span>-60</span><span class="ms-3 ps-1">-40</span><span class="ms-1 ps-1">-20</span><span>-10</span><span>0</span><span>12</span></div>` + fader('vol', x, v);
  }
  if (kind === 'sel') {
    html += `${fader('pan', 48, '0.0').replace('margin-top:2px', 'margin-top:0')}<div class="d-flex align-items-center" style="margin:2px 6px 0 5px;background:#1b1e22;height:11px;color:#d5d8da;font-size:7px"><button style="width:13px;height:11px;background:#454b53" class="d-grid" aria-label="Activer"><svg class="m-auto" width="7" height="7" style="color:#ccc"><use href="#pwr"/></svg></button><span class="ms-1">Ajouter un plug-in...</span><button class="ms-auto d-grid" style="width:10px;height:11px;background:#454b53" aria-label="Liste"><svg class="m-auto" width="5" height="4"><use href="#car"/></svg></button></div>`;
  }
  return html + '</div>';
}
const tracks = document.getElementById('tracks');
tracks.insertAdjacentHTML('beforeend', strips.map(strip).join('') +
  `<div class="d-flex setb" style="padding:4px 0 0 20px;gap:10px">${['setup', 'zoom'].map(t => `<div class="text-center" style="line-height:8px;font-size:7px">${[1, 2, 3, 4].map(i => `<button>${i}</button>`).join('')}<div>${t}</div></div>`).join('')}</div>`);
document.getElementById('edge').innerHTML = [80, 101, 122, 184, 246, 274, 305, 412, 431]
  .map(y => `<path d="M2 ${y}h5M3 ${y}v3h3M2 ${y + 9}l2-3 2 3" fill="none" stroke="#7d8285"/>`).join('');

// Arrangement, drawn in window coordinates and shifted to the pane's corner
const R = (x, y, w, h, f, extra = '') => `<rect x="${x}" y="${y}" width="${w}" height="${h}" fill="${f}" ${extra}/>`;
let a = R(148, 66, 3000, 10, '#3a3e45') + R(148, 76, 3000, 8, '#868b92') + R(148, 84, 3000, 9, '#1d2226');
[[93, 66, '#262a33'], [159, 21, '#191e21'], [180, 23, '#262a33'], [203, 61, '#181d20'], [264, 61, '#262a33'], [325, 28, '#171c1f'], [353, 31, '#252933'], [384, 107, '#3f444b'], [491, 13, '#252833'], [504, 7, '#181c1f'], [511, 7, '#252833']].forEach(l => a += R(148, l[0], 3000, l[1], l[2]));
a += R(148, 437, 3000, 1, '#31363c');
const bars = [833, 866, 898, 931, 964, 996];
['85', '89', '93', '97', '101', '1'].forEach((t, i) => a += R(bars[i], 80, 1, 4, '#eee') + `<text x="${bars[i] + 2}" y="83" fill="#f2f3f4">${t}</text>`);
a += R(866, 152, 130, 7, '#39754f');
[866, 898, 931, 964].forEach((x, i) => a += R(x, 93, 1, 66, i === 2 ? '#d9962f' : '#4c7f66') + R(x + 18, 155, 5, 3, '#d9352b') + R(x + 19, 153, 3, 2, '#a83029') + `<path d="M${x + 5} 155.500h4v-2M${x + 11} 157.500h3" stroke="#12281c" fill="none"/>`);
a += R(996, 93, 1, 66, '#3a5a4c') + R(833.5, 180.5, 162, 22, 'none', 'stroke="#5d9db8"') + R(833, 196, 163, 7, '#438fdd');
for (let i = 1; i < 10; i++) a += R(833 + Math.round(i * 16.3), 180, 1, 16, i % 2 ? '#4d93b0' : '#e0a34d');
a += R(898, 325, 98, 28, '#a96812') + R(898, 330, 98, 1, '#8f8a7c') + R(898, 340, 98, 1, '#8f8a7c') + R(866, 353, 130, 31, '#3f2705') + R(866, 375, 130, 9, '#80500c');
const wave = (x, y) => `<g transform="translate(${x} ${y})">${R(0, 0, 13, 4, 'url(#wave)')}</g>`;
for (let i = 0; i < 8; i++) { const x = 866 + Math.round(i * 16.3); a += R(x, 353, 1, 31, '#a96812') + wave(x + 2, 357) + wave(x + 2, 369); if (i > 1) a += R(x, 325, 1, 28, '#cf9140'); }
a += R(620, 93, 16, 66, '#332f46') + R(628, 93, 1, 59, '#8b6fc0') + R(620, 152, 16, 7, '#8a72c4') + R(620, 173, 16, 7, '#39754f') + R(624, 174, 4, 4, '#d9352b') + R(620, 203, 16, 1, '#5d9db8') + R(620, 256, 16, 8, '#438fdd');
a += R(572, 318, 230, 35, '#a96812') + R(572, 353, 64, 31, '#3f2705') + R(572, 375, 64, 9, '#80500c') + wave(623, 357) + wave(623, 369);
[638, 671, 736, 769].forEach(x => a += R(x, 310, 1, 16, '#e0a34d'));
a += '<path d="M588.500 375v143" stroke="#a8adb3" stroke-dasharray="5 2"/>';
document.getElementById('arrange').innerHTML = `<g transform="translate(-148 -66)">${a}</g>`;

document.getElementById('rlist').innerHTML = [['fx', 'Gain'], ['aux', 'AUX/Sortie (Pre)'], ['fx', 'Volume'], ['fx', 'Stereo Pan', 1], ['aux', 'AUX/Sortie (Post)'], ['out', 'Sortie primaire']]
  .map(([i, t, on]) => `<li class="r${on ? ' act' : ''}">${on ? '<span class="pw"><svg width="9" height="9"><use href="#pwr"/></svg></span>' : '<span class="spine"></span>'}${icon(i, 9, 9)}<span style="margin-left:5px">${t}</span></li>`).join('');

document.getElementById('panmenu').innerHTML = ['[0] Null (stereo reset)', '[1] LeftChannel only', '[2] RightChannel only', '[3] Phase invert', '[4] Mono (get mid signal from stereo source)', '[5] PanLaw_3dB', '[5] PanLaw_4-5dB (correlated stereo channels)', '[6] PanLaw_6dB (mono source)', '[7] Side signal (Mono) (from stereo source)', '[8] Side signal (Stereo) (from stereo source)', '[9] Convert Side signal (Mono) to Stereo', '[A] Side signal (Stereo) (from MS source)', '[B] Switch Channels']
  .map((t, i) => `<button${i === 4 ? ' class="hov"' : ''}>${t}</button>`).join('') + '<div style="height:1px;background:#a9adbd;margin:3px 4px"></div><button>Charger...</button><button>Enregistrer...</button>';
</script>
<script src="https://cdn.jsdelivr.net/npm/bootstrap@5.3.0/dist/js/bootstrap.bundle.min.js"></script>
</body>
</html>
